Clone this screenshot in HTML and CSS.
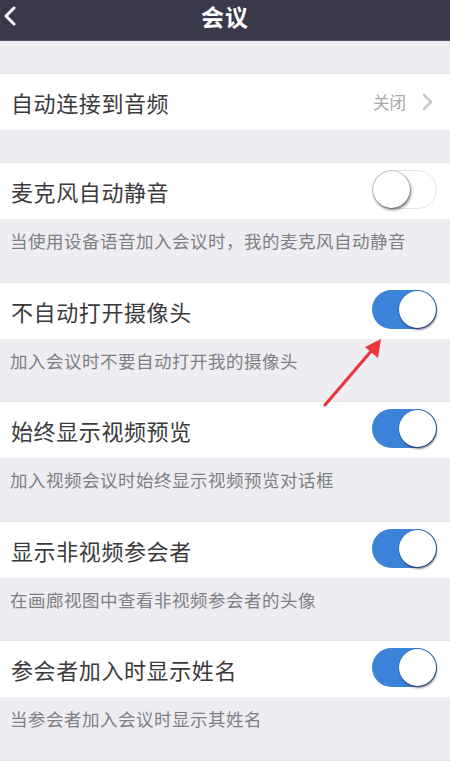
FILE: index.html
```html
<!DOCTYPE html>
<html lang="zh">
<head>
<meta charset="utf-8">
<link rel="stylesheet" href="styles.css">
</head>
<body>
<div class="page">
  <header class="header">
    <svg class="back" width="14" height="20" viewBox="0 0 14 20"><path d="M11 2 L3 10 L11 18" fill="none" stroke="#fff" stroke-width="3" stroke-linecap="round" stroke-linejoin="round"/></svg>
    <div class="title">会议</div>
  </header>
  <div class="gap"></div>
  <div class="row">
    <span class="label">自动连接到音频</span>
    <span class="value">关闭
      <svg class="chev" width="12" height="18" viewBox="0 0 12 18"><path d="M2 2 L9 9 L2 16" fill="none" stroke="#c8c8cc" stroke-width="2.5" stroke-linecap="round" stroke-linejoin="round"/></svg>
    </span>
  </div>
  <div class="gap"></div>
  <div class="row">
    <span class="label">麦克风自动静音</span>
    <span class="toggle off"><span class="knob"></span></span>
  </div>
  <div class="desc">当使用设备语音加入会议时，我的麦克风自动静音</div>
  <div class="row">
    <span class="label">不自动打开摄像头</span>
    <span class="toggle on"><span class="knob"></span></span>
  </div>
  <div class="desc">加入会议时不要自动打开我的摄像头</div>
  <div class="row">
    <span class="label">始终显示视频预览</span>
    <span class="toggle on"><span class="knob"></span></span>
  </div>
  <div class="desc">加入视频会议时始终显示视频预览对话框</div>
  <div class="row">
    <span class="label">显示非视频参会者</span>
    <span class="toggle on"><span class="knob"></span></span>
  </div>
  <div class="desc">在画廊视图中查看非视频参会者的头像</div>
  <div class="row">
    <span class="label">参会者加入时显示姓名</span>
    <span class="toggle on"><span class="knob"></span></span>
  </div>
  <div class="desc">当参会者加入会议时显示其姓名</div>

  <svg class="arrow" width="70" height="80" viewBox="0 0 70 80">
    <line x1="4" y1="74" x2="52" y2="18" stroke="#e8383c" stroke-width="3.2" stroke-linecap="round"/>
    <polygon points="60,8 57,27 44,16" fill="#e8383c"/>
  </svg>
</div>
</body>
</html>
```

FILE: styles.css
```css
* { box-sizing: border-box; }
html, body { margin: 0; padding: 0; }
body {
  background: #ededf2;
  font-family: "Noto Sans CJK SC", "Noto Sans", sans-serif;
  width: 450px;
  height: 761px;
  overflow: hidden;
}
.page {
  position: relative;
  display: flex;
  flex-direction: column;
}
.header {
  height: 41px;
  background: #3a384b;
  display: flex;
  align-items: center;
  justify-content: center;
  position: relative;
  border-bottom: 1px solid #56546a;
}
.back {
  position: absolute;
  left: 3px;
  top: 6px;
}
.title {
  color: #fff;
  font-size: 23px;
  font-weight: 700;
  letter-spacing: 1px;
  line-height: 1;
  margin-top: -8px;
}
.gap {
  height: 33px;
  border-bottom: 1px solid #e3e3e8;
}
.row {
  height: 56px;
  background: #fff;
  display: flex;
  align-items: center;
  justify-content: space-between;
  padding: 0 13px 0 11px;
}
.label {
  font-size: 22px;
  color: #3a3a3c;
  letter-spacing: 0.6px;
}
.value {
  display: flex;
  align-items: center;
  gap: 16px;
  font-size: 16.5px;
  color: #a8a8a8;
  margin-right: 3px;
}
.desc {
  height: 63.5px;
  padding: 10px 10px 0;
  font-size: 17.5px;
  line-height: 24px;
  color: #808084;
  letter-spacing: 0.5px;
  border-bottom: 1px solid #e3e3e8;
}
.toggle {
  width: 65px;
  height: 39px;
  border-radius: 20px;
  position: relative;
  margin-top: -3px;
}
.toggle.on { background: #3b82d9; }
.toggle.off {
  background: #fff;
  border: 1.5px solid #e4e4e8;
}
.knob {
  position: absolute;
  top: 1px;
  width: 37px;
  height: 37px;
  border-radius: 50%;
  background: #fff;
  box-shadow: 1px 2px 2px rgba(30, 30, 50, 0.55), 0 0 0 0.5px rgba(0, 0, 0, 0.25);
}
.toggle.on .knob { right: 1px; }
.toggle.off .knob { left: 0; top: 0; box-shadow: 1px 2px 3px rgba(30, 30, 50, 0.6), 0 0 0 0.5px rgba(0, 0, 0, 0.3); }
.arrow {
  position: absolute;
  left: 321px;
  top: 331px;
}
```
